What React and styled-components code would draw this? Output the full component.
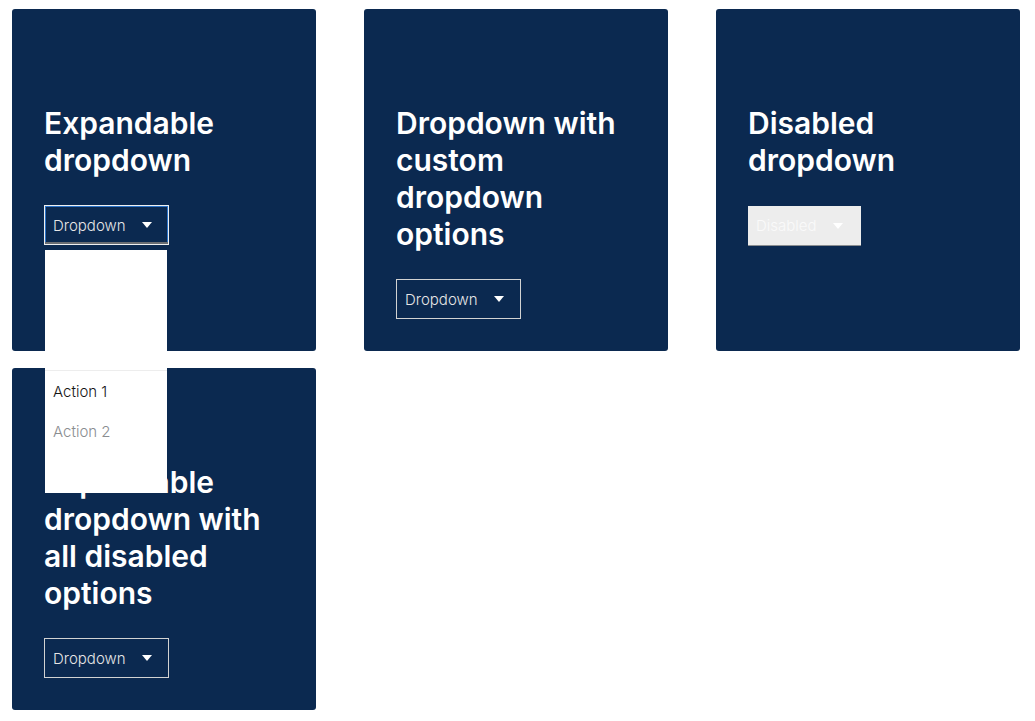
import React from "react";
import styled, { createGlobalStyle, css } from "styled-components";

const GlobalStyle = createGlobalStyle`
  body {
    margin: 8px;
    background: #fff;
    font-family: "Inter", "Noto Sans", sans-serif;
  }
`;

const Grid = styled.div`
  display: grid;
  grid-template-columns: repeat(3, 304px);
  column-gap: 48px;
  row-gap: 17px;
  padding: 1px 4px;
`;

const Card = styled.div`
  position: relative;
  background: #0b2950;
  border-radius: 3px;
  padding: 96px 32px 32px;
  display: flex;
  flex-direction: column;
  align-items: flex-start;
`;

const Title = styled.h2`
  margin: 0 0 26px;
  color: #fff;
  font-family: "Inter", sans-serif;
  font-weight: 600;
  font-size: 30px;
  line-height: 37px;
  letter-spacing: 0;
`;

const ToggleWrap = styled.div`
  position: relative;
`;

const Toggle = styled.button`
  display: flex;
  align-items: center;
  gap: 16px;
  height: 40px;
  padding: 0 16px 0 8px;
  background: transparent;
  border: 1px solid #d2d2d2;
  color: #e6e6e6;
  font-family: "Inter", sans-serif;
  font-size: 15px;
  font-weight: 300;
  cursor: pointer;

  ${p =>
    p.$open &&
    css`
      border-color: #f0f0f0;
      box-shadow: inset 0 -2px 0 #6a6e73, inset 0 0 0 1px #2b73c8;
    `}

  ${p =>
    p.disabled &&
    css`
      background: #ededed;
      border: none;
      border-bottom: 1px solid #8a8d90;
      color: #fafafa;
      cursor: default;
      margin-top: 1px;
      padding-left: 8px;
      padding-right: 18px;
    `}
`;

const Caret = () => (
  <svg width="10" height="6" viewBox="0 0 10 6" fill="currentColor">
    <path d="M0 0h10L5 6z" />
  </svg>
);

const CaretBox = styled.span`
  display: flex;
  color: #fff;
`;

const Menu = styled.div`
  position: absolute;
  top: 45px;
  left: 1px;
  width: 122px;
  z-index: 10;
  background: #fff;
  padding-top: 120px;
  padding-bottom: 42px;
`;

const Divider = styled.div`
  height: 1px;
  background: #ededed;
`;

const Item = styled.div`
  padding: 0 8px;
  height: 40px;
  display: flex;
  align-items: center;
  font-family: "Inter", sans-serif;
  font-size: 15px;
  font-weight: 300;
  color: ${p => (p.$disabled ? "#8a8d90" : "#151515")};
`;

const Dropdown = ({ label = "Dropdown", open, disabled }) => (
  <ToggleWrap>
    <Toggle $open={open} disabled={disabled}>
      {label}
      <CaretBox>
        <Caret />
      </CaretBox>
    </Toggle>
    {open && (
      <Menu>
        <Divider />
        <Item>Action 1</Item>
        <Item $disabled>Action 2</Item>
      </Menu>
    )}
  </ToggleWrap>
);

const cards = [
  { title: ["Expandable", "dropdown"], open: true },
  { title: ["Dropdown with", "custom", "dropdown", "options"] },
  { title: ["Disabled", "dropdown"], disabled: true, label: "Disabled" },
  { title: ["Expandable", "dropdown with", "all disabled", "options"] }
];

export default function App() {
  return (
    <>
      <GlobalStyle />
      <Grid>
        {cards.map((c, i) => (
          <Card key={i} style={{ zIndex: c.open ? 2 : 1 }}>
            <Title>
              {c.title.map((t, j) => (
                <React.Fragment key={j}>
                  {t}
                  {j < c.title.length - 1 && <br />}
                </React.Fragment>
              ))}
            </Title>
            <Dropdown open={c.open} disabled={c.disabled} label={c.label} />
          </Card>
        ))}
      </Grid>
    </>
  );
}
